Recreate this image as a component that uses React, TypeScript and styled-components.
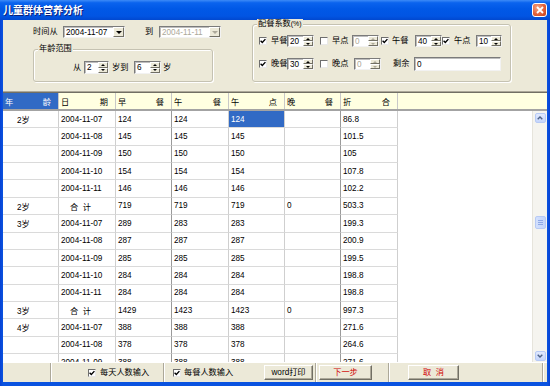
import React from "react";
import styled, { createGlobalStyle } from "styled-components";

const FONT = `"Liberation Sans", "Noto Sans CJK SC", sans-serif`;

const GlobalStyle = createGlobalStyle`
  html, body { margin: 0; padding: 0; width: 550px; height: 386px; overflow: hidden; background: #0A53E0; }
  * { box-sizing: border-box; }
  #root { width: 550px; height: 386px; }
`;

const Window = styled.div`
  width: 550px;
  height: 386px;
  display: flex;
  flex-direction: column;
  background: linear-gradient(90deg, #0842D4 0px, #0A53E0 3px, #0A53E0 547px, #0842D4 550px);
  font-family: ${FONT};
  font-size: 8.2px;
  color: #000;
`;

const TitleBar = styled.div`
  height: 20px;
  flex: none;
  display: flex;
  align-items: center;
  justify-content: space-between;
  padding: 0 3px;
  background: linear-gradient(180deg, #3D8BF7 0%, #0A63EE 14%, #0058E6 45%, #0155E3 80%, #0148CF 100%);
`;

const Title = styled.span`
  color: #fff;
  font-family: "Noto Sans CJK SC", sans-serif;
  font-weight: bold;
  font-size: 10px;
  line-height: 12px;
  text-shadow: 1px 1px 0 #0A1F7A;
`;

const CloseButton = styled.div`
  width: 15px;
  height: 14px;
  border: 1px solid #fff;
  border-radius: 3px;
  background: radial-gradient(circle at 35% 30%, #F4A585 0%, #E2613A 55%, #C2401A 100%);
  display: flex;
  align-items: center;
  justify-content: center;
`;

const Client = styled.div`
  flex: 1;
  min-height: 0;
  margin: 0 3px 4px;
  display: flex;
  flex-direction: column;
  background: #ECE9D8;
`;

/* ---------- top panel ---------- */

const TopPanel = styled.div`
  height: 71px;
  flex: none;
  display: flex;
`;

const LeftColumn = styled.div`
  width: 249px;
  flex: none;
  padding: 6px 0 0 30px;
  display: flex;
  flex-direction: column;
`;

const FieldRow = styled.div<{ $h: number; $mt?: number }>`
  height: ${(p) => p.$h}px;
  margin-top: ${(p) => p.$mt ?? 0}px;
  display: flex;
  align-items: center;
  flex: none;
`;

const Text = styled.span<{ $w?: number; $ml?: number; $color?: string }>`
  flex: none;
  width: ${(p) => (p.$w ? `${p.$w}px` : "auto")};
  margin-left: ${(p) => p.$ml ?? 0}px;
  color: ${(p) => p.$color ?? "#000"};
  white-space: pre;
  line-height: 12px;
`;

const GroupBox = styled.div<{ $w: number; $h: number; $mt: number }>`
  position: relative;
  width: ${(p) => p.$w}px;
  height: ${(p) => p.$h}px;
  margin-top: ${(p) => p.$mt}px;
  flex: none;
  border: 1px solid #C5C2B2;
  border-radius: 3px;
  box-shadow: inset 1px 1px 0 #fff, 1px 1px 0 #fff;
`;

const GroupLabel = styled.span`
  position: absolute;
  top: -6px;
  left: 4px;
  padding: 0 1px;
  background: #ECE9D8;
  line-height: 10px;
  white-space: nowrap;
`;

const Small = styled.span`
  font-size: 7px;
`;

const AgeRow = styled.div`
  height: 13px;
  margin: 11px 0 0 39px;
  display: flex;
  align-items: center;
`;

const ConfigRows = styled.div`
  padding-left: 6px;
  display: flex;
  flex-direction: column;
`;

const Sunken = styled.div<{ $w: number; $h: number; $ml?: number }>`
  width: ${(p) => p.$w}px;
  height: ${(p) => p.$h}px;
  margin-left: ${(p) => p.$ml ?? 0}px;
  flex: none;
  display: flex;
  background: #fff;
  border: 1px solid;
  border-color: #7B7B7B #F2F2F2 #F2F2F2 #7B7B7B;
  box-shadow: inset 1px 1px 0 #BDBDBD;
`;

const FieldValue = styled.span<{ $disabled?: boolean }>`
  flex: 1;
  padding-left: 2px;
  display: flex;
  align-items: center;
  color: ${(p) => (p.$disabled ? "#ACA899" : "#000")};
  overflow: hidden;
  white-space: nowrap;
`;

const SpinButtons = styled.div`
  width: 10px;
  flex: none;
  display: flex;
  flex-direction: column;
`;

const RaisedBtn = styled.div`
  flex: 1;
  background: #ECE9D8;
  border: 1px solid;
  border-color: #fff #716F64 #716F64 #fff;
  display: flex;
  align-items: center;
  justify-content: center;
`;

const DropBtn = styled(RaisedBtn)`
  flex: none;
  width: 11px;
`;

const Tri = styled.span<{ $down?: boolean; $disabled?: boolean }>`
  width: 0;
  height: 0;
  border-left: 2px solid transparent;
  border-right: 2px solid transparent;
  ${(p) =>
    p.$down
      ? `border-top: 2px solid ${p.$disabled ? "#ACA899" : "#000"};`
      : `border-bottom: 2px solid ${p.$disabled ? "#ACA899" : "#000"};`}
`;

const DropTri = styled.span<{ $disabled?: boolean }>`
  width: 0;
  height: 0;
  border-left: 3px solid transparent;
  border-right: 3px solid transparent;
  border-top: 3px solid ${(p) => (p.$disabled ? "#ACA899" : "#000")};
`;

const CheckBox = styled.span<{ $ml?: number }>`
  width: 8px;
  height: 8px;
  flex: none;
  margin-left: ${(p) => p.$ml ?? 0}px;
  background: #fff;
  border: 1px solid;
  border-color: #6E6E6E #E8E8E8 #E8E8E8 #6E6E6E;
  display: flex;
  align-items: center;
  justify-content: center;
`;

function Check({ checked, ml }: { checked?: boolean; ml?: number }) {
  return (
    <CheckBox $ml={ml}>
      {checked && (
        <svg width="6" height="6" viewBox="0 0 6 6">
          <path d="M0.6 2.8 L2.3 4.5 L5.4 1.1" fill="none" stroke="#000" strokeWidth="1.4" />
        </svg>
      )}
    </CheckBox>
  );
}

function Spin({ value, w, h = 12, ml, disabled }: { value: string; w: number; h?: number; ml?: number; disabled?: boolean }) {
  return (
    <Sunken $w={w} $h={h} $ml={ml}>
      <FieldValue $disabled={disabled}>{value}</FieldValue>
      <SpinButtons>
        <RaisedBtn>
          <Tri $disabled={disabled} />
        </RaisedBtn>
        <RaisedBtn>
          <Tri $down $disabled={disabled} />
        </RaisedBtn>
      </SpinButtons>
    </Sunken>
  );
}

function Combo({ value, ml, disabled }: { value: string; ml?: number; disabled?: boolean }) {
  return (
    <Sunken $w={62} $h={12} $ml={ml}>
      <FieldValue $disabled={disabled}>{value}</FieldValue>
      <DropBtn>
        <DropTri $disabled={disabled} />
      </DropBtn>
    </Sunken>
  );
}

/* ---------- grid ---------- */

const COLS = [56, 57, 56, 57, 56, 56, 57];
const STRONG = [2, 5];

const Grid = styled.div`
  height: 271px;
  flex: none;
  display: flex;
  flex-direction: column;
  border-top: 1px solid #ACA899;
`;

const HeaderRow = styled.div`
  height: 19px;
  flex: none;
  display: flex;
  background: #FFFFE1;
  border-top: 1px solid #716F64;
  border-bottom: 2px solid #A3A3A3;
`;

const HeaderCell = styled.div<{ $w: number; $active?: boolean }>`
  width: ${(p) => p.$w}px;
  flex: none;
  display: flex;
  align-items: center;
  justify-content: space-between;
  padding: 0 7px 0 2px;
  border-right: 1px solid #C8C8C8;
  background: ${(p) => (p.$active ? "#316AC5" : "transparent")};
  color: ${(p) => (p.$active ? "#fff" : "#000")};
`;

const HeaderFill = styled.div`
  flex: 1;
`;

const Body = styled.div`
  flex: 1;
  min-height: 0;
  display: flex;
`;

const Table = styled.div`
  flex: 1;
  background: #fff;
  overflow: hidden;
`;

const Row = styled.div`
  display: flex;
  height: 17.36px;
`;

const Cell = styled.div<{ $w: number; $pad: number; $sel?: boolean; $strong?: boolean }>`
  width: ${(p) => p.$w}px;
  flex: none;
  display: flex;
  align-items: center;
  padding-left: ${(p) => p.$pad}px;
  white-space: pre;
  border-right: 1px solid ${(p) => (p.$strong ? "#9A9A9A" : "#CFCFCF")};
  border-bottom: 1px solid #DADADA;
  background: ${(p) => (p.$sel ? "#316AC5" : "#fff")};
  color: ${(p) => (p.$sel ? "#fff" : "#000")};
`;

const ScrollBar = styled.div`
  width: 15px;
  flex: none;
  display: flex;
  flex-direction: column;
  align-items: center;
  padding: 2px 0 1px;
  background: #F5F4EF;
  border-left: 1px solid #E6E4DC;
`;

const ScrollBtn = styled.div`
  width: 11px;
  height: 10px;
  flex: none;
  border-radius: 2px;
  border: 1px solid #B7CAF5;
  background: linear-gradient(180deg, #E0E9FE 0%, #C4D5FB 100%);
  display: flex;
  align-items: center;
  justify-content: center;
`;

const Thumb = styled.div`
  width: 11px;
  height: 13px;
  margin-top: 93px;
  flex: none;
  border-radius: 2px;
  border: 1px solid #B7CAF5;
  background: linear-gradient(90deg, #D3E0FD 0%, #C4D5FB 100%);
  display: flex;
  flex-direction: column;
  align-items: center;
  justify-content: center;
  gap: 1px;
`;

const Grip = styled.span`
  width: 5px;
  height: 1px;
  background: #8FA9E6;
`;

const ScrollSpace = styled.div`
  flex: 1;
`;

/* ---------- bottom bar ---------- */

const BottomBar = styled.div`
  height: 20px;
  flex: none;
  display: flex;
  border-top: 1px solid #fff;
`;

const BarPanel = styled.div<{ $w?: number; $pl?: number; $first?: boolean }>`
  width: ${(p) => (p.$w ? `${p.$w}px` : "auto")};
  flex: ${(p) => (p.$w ? "none" : "1")};
  display: flex;
  align-items: center;
  padding-left: ${(p) => p.$pl ?? 0}px;
  padding-right: 2px;
  border-left: ${(p) => (p.$first ? "none" : "1px solid #ACA899")};
  box-shadow: ${(p) => (p.$first ? "none" : "inset 1px 0 0 #fff")};
`;

const BarButton = styled.button<{ $w: number; $red?: boolean; $ml?: number }>`
  width: ${(p) => p.$w}px;
  height: 15px;
  flex: none;
  margin: 0 0 0 ${(p) => (p.$ml === undefined ? "0px" : p.$ml < 0 ? "auto" : `${p.$ml}px`)};
  padding: 0;
  font-family: ${FONT};
  font-size: 8.2px;
  line-height: 12px;
  white-space: pre;
  color: ${(p) => (p.$red ? "#D00000" : "#000")};
  background: #ECE9D8;
  border: 1px solid;
  border-color: #fff #716F64 #716F64 #fff;
  box-shadow: inset -1px -1px 0 #ACA899;
`;

type RowData = [string, string, string, string, string, string, string];

const ROWS: RowData[] = [
  ["2岁", "2004-11-07", "124", "124", "124", "", "86.8"],
  ["", "2004-11-08", "145", "145", "145", "", "101.5"],
  ["", "2004-11-09", "150", "150", "150", "", "105"],
  ["", "2004-11-10", "154", "154", "154", "", "107.8"],
  ["", "2004-11-11", "146", "146", "146", "", "102.2"],
  ["2岁", "合  计", "719", "719", "719", "0", "503.3"],
  ["3岁", "2004-11-07", "289", "283", "283", "", "199.3"],
  ["", "2004-11-08", "287", "287", "287", "", "200.9"],
  ["", "2004-11-09", "285", "285", "285", "", "199.5"],
  ["", "2004-11-10", "284", "284", "284", "", "198.8"],
  ["", "2004-11-11", "284", "284", "284", "", "198.8"],
  ["3岁", "合  计", "1429", "1423", "1423", "0", "997.3"],
  ["4岁", "2004-11-07", "388", "388", "388", "", "271.6"],
  ["", "2004-11-08", "378", "378", "378", "", "264.6"],
  ["", "2004-11-09", "388", "388", "388", "", "271.6"],
];

const HEADERS: [string, string][] = [
  ["年", "龄"],
  ["日", "期"],
  ["早", "餐"],
  ["午", "餐"],
  ["午", "点"],
  ["晚", "餐"],
  ["折", "合"],
];

function padFor(col: number, text: string) {
  if (col === 0) return 14;
  if (col === 1 && text.startsWith("合")) return 11;
  return 2;
}

function Chevron({ up }: { up?: boolean }) {
  return (
    <svg width="6" height="4" viewBox="0 0 6 4">
      <path d={up ? "M0.7 3.3 L3 1 L5.3 3.3" : "M0.7 0.7 L3 3 L5.3 0.7"} fill="none" stroke="#4D6185" strokeWidth="1.4" />
    </svg>
  );
}

export default function App() {
  return (
    <>
      <GlobalStyle />
      <Window>
        <TitleBar>
          <Title>儿童群体营养分析</Title>
          <CloseButton>
            <svg width="8" height="8" viewBox="0 0 8 8">
              <path d="M1 1 L7 7 M7 1 L1 7" stroke="#fff" strokeWidth="1.8" />
            </svg>
          </CloseButton>
        </TitleBar>
        <Client>
          <TopPanel>
            <LeftColumn>
              <FieldRow $h={12}>
                <Text $w={30}>时间从</Text>
                <Combo value="2004-11-07" />
                <Text $w={14} $ml={20}>到</Text>
                <Combo value="2004-11-11" disabled />
              </FieldRow>
              <GroupBox $w={180} $h={33} $mt={11}>
                <GroupLabel>年龄范围</GroupLabel>
                <AgeRow>
                  <Text $w={8}>从</Text>
                  <Spin value="2" w={25} h={13} ml={3} />
                  <Text $w={19} $ml={3}>岁到</Text>
                  <Spin value="6" w={27} h={13} ml={3} />
                  <Text $ml={2}>岁</Text>
                </AgeRow>
              </GroupBox>
            </LeftColumn>
            <GroupBox $w={259} $h={58} $mt={4}>
              <GroupLabel>
                配餐系数<Small>(%)</Small>
              </GroupLabel>
              <ConfigRows>
                <FieldRow $h={12} $mt={10}>
                  <Check checked />
                  <Text $w={16} $ml={4}>早餐</Text>
                  <Spin value="20" w={27} />
                  <Check ml={6} />
                  <Text $w={16} $ml={4}>早点</Text>
                  <Spin value="0" w={27} ml={4} disabled />
                  <Check checked ml={2} />
                  <Text $w={16} $ml={3}>午餐</Text>
                  <Spin value="40" w={27} ml={7} />
                  <Check checked />
                  <Text $w={16} $ml={4}>午点</Text>
                  <Spin value="10" w={26} ml={6} />
                </FieldRow>
                <FieldRow $h={12} $mt={11}>
                  <Check checked />
                  <Text $w={16} $ml={4}>晚餐</Text>
                  <Spin value="30" w={27} />
                  <Check ml={6} />
                  <Text $w={16} $ml={4}>晚点</Text>
                  <Spin value="0" w={27} ml={6} disabled />
                  <Text $w={16} $ml={12}>剩余</Text>
                  <Sunken $w={87} $h={14} $ml={5}>
                    <FieldValue>0</FieldValue>
                  </Sunken>
                </FieldRow>
              </ConfigRows>
            </GroupBox>
          </TopPanel>

          <Grid>
            <HeaderRow>
              {HEADERS.map(([a, b], i) => (
                <HeaderCell key={i} $w={COLS[i]} $active={i === 0}>
                  <span>{a}</span>
                  <span>{b}</span>
                </HeaderCell>
              ))}
              <HeaderFill />
            </HeaderRow>
            <Body>
              <Table>
                {ROWS.map((r, ri) => (
                  <Row key={ri}>
                    {r.map((v, ci) => (
                      <Cell
                        key={ci}
                        $w={COLS[ci]}
                        $pad={padFor(ci, v)}
                        $sel={ri === 0 && ci === 4}
                        $strong={STRONG.includes(ci)}
                      >
                        {v}
                      </Cell>
                    ))}
                  </Row>
                ))}
              </Table>
              <ScrollBar>
                <ScrollBtn>
                  <Chevron up />
                </ScrollBtn>
                <Thumb>
                  <Grip />
                  <Grip />
                  <Grip />
                </Thumb>
                <ScrollSpace />
                <ScrollBtn>
                  <Chevron />
                </ScrollBtn>
              </ScrollBar>
            </Body>
          </Grid>

          <BottomBar>
            <BarPanel $w={47} $first />
            <BarPanel $w={113} $pl={37}>
              <Check checked />
              <Text $ml={4}>每天人数输入</Text>
            </BarPanel>
            <BarPanel $w={152} $pl={9}>
              <Check checked />
              <Text $ml={3}>每餐人数输入</Text>
              <BarButton $w={49} $ml={-1}>word打印</BarButton>
            </BarPanel>
            <BarPanel $w={73} $pl={3}>
              <BarButton $w={53} $red>下一步</BarButton>
            </BarPanel>
            <BarPanel $w={154} $pl={19}>
              <BarButton $w={51} $red>取  消</BarButton>
            </BarPanel>
            <BarPanel />
          </BottomBar>
        </Client>
      </Window>
    </>
  );
}
